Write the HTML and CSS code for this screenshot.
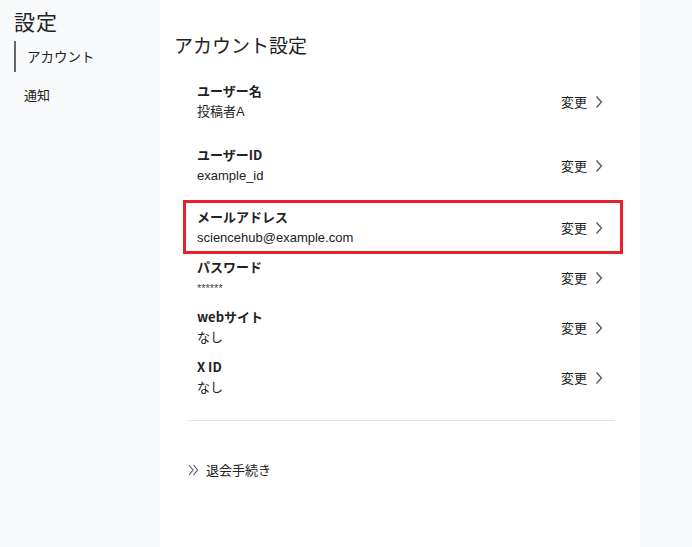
FILE: index.html
```html
<!DOCTYPE html>
<html lang="ja">
<head>
<meta charset="utf-8">
<link rel="stylesheet" href="styles.css">
</head>
<body>
<div class="page">
  <aside class="sidebar">
    <h1 class="side-title">設定</h1>
    <nav class="side-nav">
      <a class="side-item active">アカウント</a>
      <a class="side-item">通知</a>
    </nav>
  </aside>
  <main class="main">
    <h2 class="main-title">アカウント設定</h2>
    <div class="list">
      <div class="row tall">
        <div class="info"><div class="label">ユーザー名</div><div class="value">投稿者A</div></div>
        <div class="action">変更<svg class="chev" viewBox="0 0 8 14" width="8" height="14"><polyline points="1.5,1.5 6.5,7 1.5,12.5" /></svg></div>
      </div>
      <div class="row tall">
        <div class="info"><div class="label">ユーザーID</div><div class="value">example_id</div></div>
        <div class="action">変更<svg class="chev" viewBox="0 0 8 14" width="8" height="14"><polyline points="1.5,1.5 6.5,7 1.5,12.5" /></svg></div>
      </div>
      <div class="row highlight">
        <div class="info"><div class="label">メールアドレス</div><div class="value">sciencehub@example.com</div></div>
        <div class="action">変更<svg class="chev" viewBox="0 0 8 14" width="8" height="14"><polyline points="1.5,1.5 6.5,7 1.5,12.5" /></svg></div>
      </div>
      <div class="row short">
        <div class="info"><div class="label">パスワード</div><div class="value stars">******</div></div>
        <div class="action">変更<svg class="chev" viewBox="0 0 8 14" width="8" height="14"><polyline points="1.5,1.5 6.5,7 1.5,12.5" /></svg></div>
      </div>
      <div class="row short">
        <div class="info"><div class="label">webサイト</div><div class="value">なし</div></div>
        <div class="action">変更<svg class="chev" viewBox="0 0 8 14" width="8" height="14"><polyline points="1.5,1.5 6.5,7 1.5,12.5" /></svg></div>
      </div>
      <div class="row short">
        <div class="info"><div class="label">X ID</div><div class="value">なし</div></div>
        <div class="action">変更<svg class="chev" viewBox="0 0 8 14" width="8" height="14"><polyline points="1.5,1.5 6.5,7 1.5,12.5" /></svg></div>
      </div>
    </div>
    <hr class="divider">
    <a class="withdraw"><svg class="dchev" viewBox="0 0 11 12" width="11" height="12"><polyline points="1,1 5,6 1,11" /><polyline points="5.5,1 9.5,6 5.5,11" /></svg>退会手続き</a>
  </main>
  <div class="rightpad"></div>
</div>
</body>
</html>
```

FILE: styles.css
```css
* { box-sizing: border-box; }
html, body { margin: 0; padding: 0; }
body {
  font-family: "Noto Sans CJK JP", "Noto Sans", "Liberation Sans", sans-serif;
  color: #222;
  background: #f8f9fb;
}
.page {
  display: flex;
  width: 692px;
  height: 547px;
}
.sidebar {
  width: 160px;
  flex: none;
  background: #f8f9fb;
  padding: 8px 0 0 14px;
}
.side-title {
  margin: 0;
  font-size: 21px;
  font-weight: 400;
  line-height: 27px;
  letter-spacing: 1px;
}
.side-nav {
  display: flex;
  flex-direction: column;
  margin-top: 6px;
}
.side-item {
  font-size: 13px;
  line-height: 20px;
  color: #222;
}
.side-item.active {
  border-left: 2px solid #666;
  padding: 5px 0 6px 11px;
  font-size: 13.5px;
}
.side-item + .side-item {
  margin-top: 13px;
  padding-left: 10px;
}
.main {
  width: 480px;
  flex: none;
  background: #fff;
  padding: 32px 0 0 14px;
}
.main-title {
  margin: 0 0 14px 0;
  font-size: 19px;
  font-weight: 400;
  line-height: 26px;
  color: #222;
}
.list {
  width: 440px;
  margin-left: 9px;
}
.row {
  display: flex;
  align-items: center;
  justify-content: space-between;
  padding-left: 11px;
  padding-right: 17px;
  border: 3px solid transparent;
}
.row.tall { padding-top: 6px; padding-bottom: 11px; }
.row.highlight {
  border-color: #e8202a;
  padding-top: 4px;
  padding-bottom: 3px;
}
.row.short { padding-top: 0; padding-bottom: 3px; }
.info { display: flex; flex-direction: column; }
.label {
  font-size: 13px;
  font-weight: 700;
  line-height: 20px;
}
.value {
  font-family: "Liberation Sans", "Noto Sans CJK JP", sans-serif;
  font-size: 13px;
  line-height: 20px;
  margin-top: 1px;
}
.value.stars { font-size: 11px; color: #444; }
.action {
  display: flex;
  align-items: center;
  font-size: 13px;
  line-height: 20px;
}
.chev {
  margin-left: 8px;
  fill: none;
  stroke: #555;
  stroke-width: 1.3;
}
.divider {
  width: 428px;
  margin: 16px 0 0 13px;
  border: 0;
  border-top: 1px solid #e2e2e2;
}
.withdraw {
  display: flex;
  align-items: center;
  margin: 39px 0 0 14px;
  font-size: 13px;
  line-height: 20px;
  color: #222;
}
.dchev {
  margin-right: 7px;
  fill: none;
  stroke: #555;
  stroke-width: 1.1;
}
.rightpad { flex: 1; background: #f8f9fb; }
```
